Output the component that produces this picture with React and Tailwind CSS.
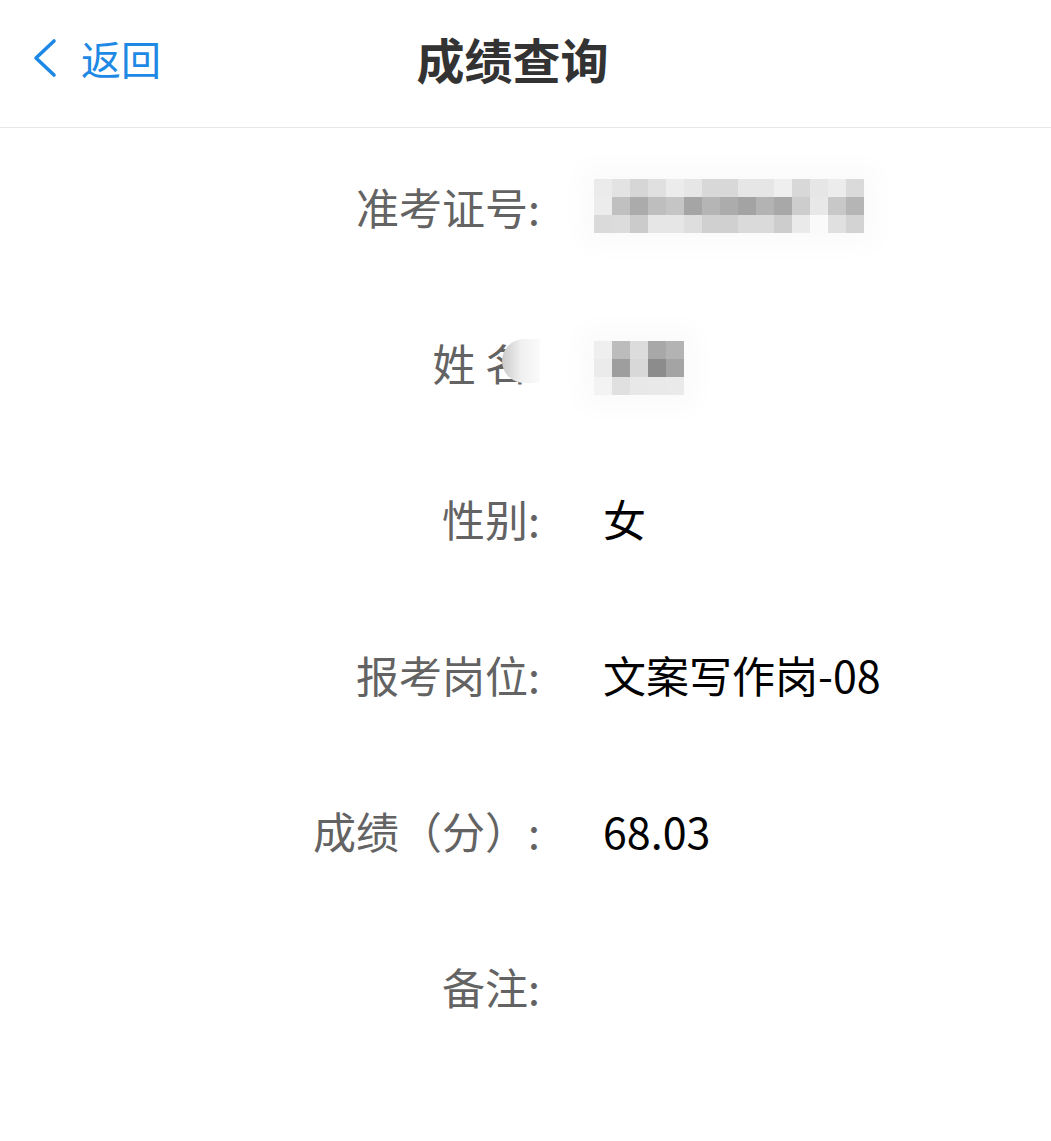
const idMosaic = [
  ['bg-[#ebebeb]', 'bg-[#e3e3e3]', 'bg-[#d6d6d6]', 'bg-[#e0e0e0]', 'bg-[#ececec]', 'bg-[#e6e6e6]', 'bg-[#d8d8d8]', 'bg-[#d8d8d8]', 'bg-[#e6e6e6]', 'bg-[#e6e6e6]', 'bg-[#efefef]', 'bg-[#d8d8d8]', 'bg-[#e6e6e6]', 'bg-[#ececec]', 'bg-[#dadada]'],
  ['bg-[#ececec]', 'bg-[#c0c0c0]', 'bg-[#ababab]', 'bg-[#bebebe]', 'bg-[#c5c5c5]', 'bg-[#a5a5a5]', 'bg-[#b5b5b5]', 'bg-[#acacac]', 'bg-[#a3a3a3]', 'bg-[#b3b3b3]', 'bg-[#a8a8a8]', 'bg-[#cdcdcd]', 'bg-[#e8e8e8]', 'bg-[#c8c8c8]', 'bg-[#b5b5b5]'],
  ['bg-[#dadada]', 'bg-[#dcdcdc]', 'bg-[#cbcbcb]', 'bg-[#e6e6e6]', 'bg-[#e6e6e6]', 'bg-[#dedede]', 'bg-[#d0d0d0]', 'bg-[#d0d0d0]', 'bg-[#dadada]', 'bg-[#dadada]', 'bg-[#cdcdcd]', 'bg-[#eaeaea]', 'bg-[#fafafa]', 'bg-[#e0e0e0]', 'bg-[#d3d3d3]'],
];

const nameMosaic = [
  ['bg-[#efefef]', 'bg-[#bcbcbc]', 'bg-[#dcdcdc]', 'bg-[#a8a8a8]', 'bg-[#b3b3b3]'],
  ['bg-[#ebebeb]', 'bg-[#9e9e9e]', 'bg-[#d8d8d8]', 'bg-[#8c8c8c]', 'bg-[#a4a4a4]'],
  ['bg-[#f3f3f3]', 'bg-[#e0e0e0]', 'bg-[#e8e8e8]', 'bg-[#e9e9e9]', 'bg-[#eaeaea]'],
];

function Mosaic({ cells }) {
  return (
    <div className="inline-flex flex-col -ml-[9px] bg-[#fbfbfb] shadow-[0_0_24px_14px_#fbfbfb]">
      {cells.map((row, i) => (
        <div key={i} className="flex">
          {row.map((c, j) => (
            <div key={j} className={`w-[18px] h-[18px] ${c}`} />
          ))}
        </div>
      ))}
    </div>
  );
}

function Row({ label, children, smudge }) {
  return (
    <div className="grid grid-cols-[540px_1fr] gap-x-[63px] h-[156px] items-center">
      <div className="relative text-right text-[43px] text-[#636363]">
        {label}
        {smudge && (
          <div className="absolute right-[0px] top-[9px] w-[38px] h-[44px] rounded-l-full bg-gradient-to-r from-[#cacaca] via-[#f0f0f0] to-[#fbfbfb]" />
        )}
      </div>
      <div className="text-[43px] text-black">{children}</div>
    </div>
  );
}

export default function App() {
  return (
    <div
      className="w-[1051px] min-h-[1141px] bg-white"
      style={{ fontFamily: '"Noto Sans CJK SC", "Noto Sans", sans-serif' }}
    >
      <header className="relative h-[128px] border-b border-[#e8e8e8] flex items-center justify-center">
        <button className="absolute left-[33px] top-[38px] flex items-center text-[#1e88e5]">
          <svg width="24" height="40" viewBox="0 0 24 40" fill="none" stroke="currentColor" strokeWidth="3.6" strokeLinecap="round" strokeLinejoin="round">
            <polyline points="21,3 3,20 21,37" />
          </svg>
          <span className="ml-[24px] text-[40px] leading-none">返回</span>
        </button>
        <h1 className="text-[48px] font-bold text-[#333333] -mt-[12px] -ml-[26px]">成绩查询</h1>
      </header>

      <main>
        <Row label="准考证号:">
          <div className="flex items-center h-[56px]">
            <Mosaic cells={idMosaic} />
          </div>
        </Row>
        <Row label="姓 名:" smudge>
          <div className="flex items-center h-[56px] translate-y-[6px]">
            <Mosaic cells={nameMosaic} />
          </div>
        </Row>
        <Row label="性别:">女</Row>
        <Row label="报考岗位:">文案写作岗-08</Row>
        <Row label="成绩（分）:">68.03</Row>
        <Row label="备注:"></Row>
      </main>
    </div>
  );
}
